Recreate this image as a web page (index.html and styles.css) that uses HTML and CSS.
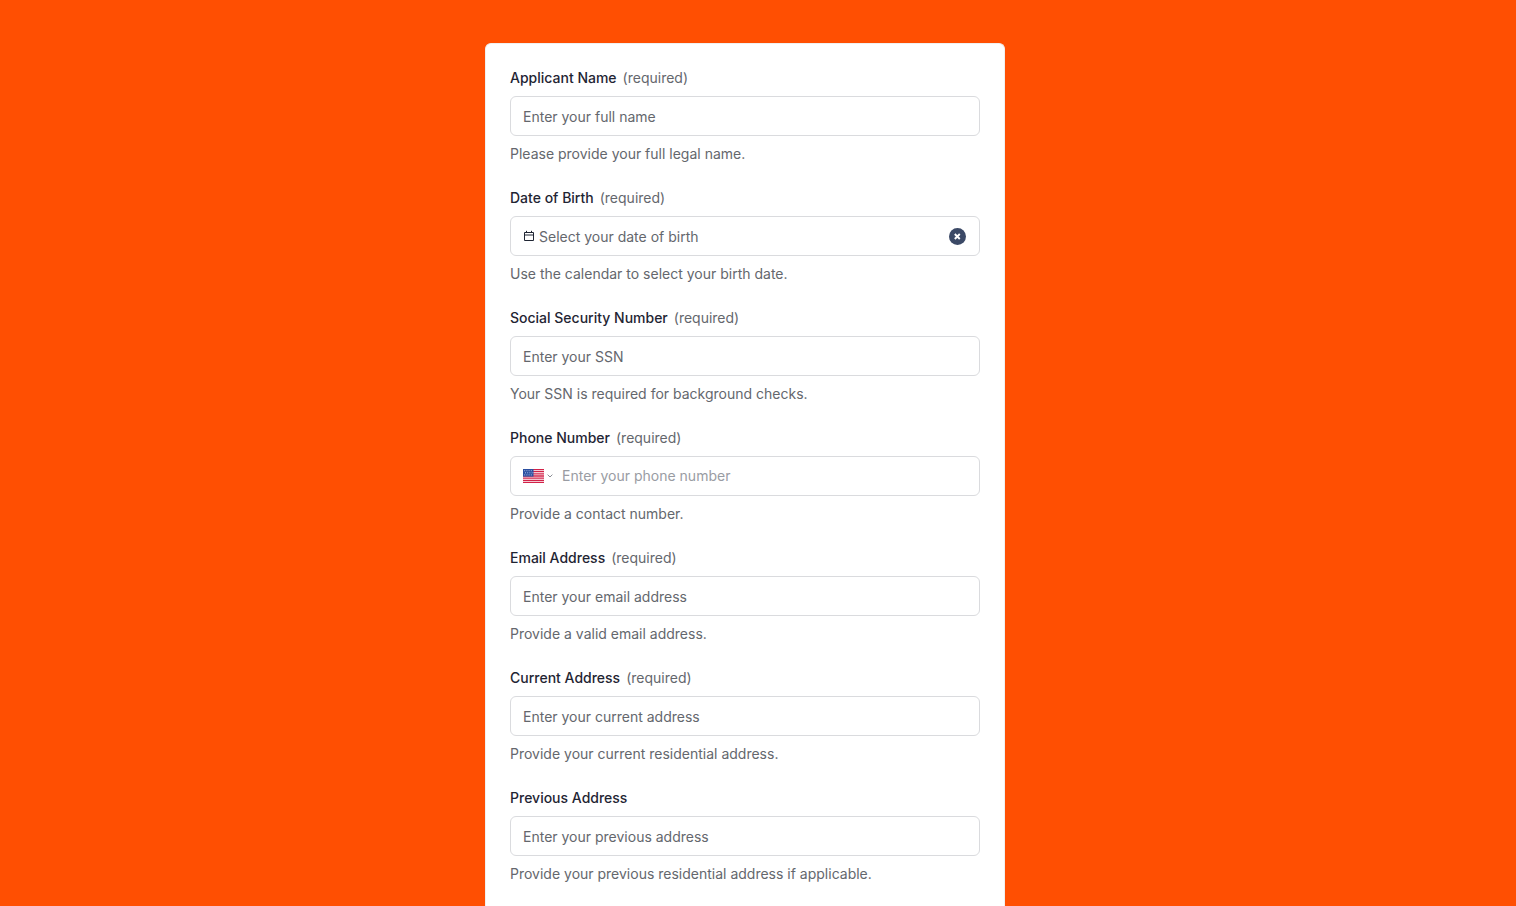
FILE: index.html
```html
<!DOCTYPE html>
<html lang="en">
<head>
<meta charset="utf-8">
<meta name="viewport" content="width=device-width, initial-scale=1">
<title>Application Form</title>
<link rel="stylesheet" href="styles.css">
</head>
<body>
<main class="page">
  <form class="card">
    <div class="field">
      <div class="field-head"><label class="label" for="name">Applicant Name</label><span class="required">(required)</span></div>
      <input class="input" id="name" type="text" placeholder="Enter your full name" aria-describedby="name-help">
      <p class="help" id="name-help">Please provide your full legal name.</p>
    </div>
    <div class="field">
      <div class="field-head"><label class="label" for="dob">Date of Birth</label><span class="required">(required)</span></div>
      <div class="control control-date">
        <svg class="calendar" viewBox="0 0 12 12" aria-hidden="true"><path d="M1.500 2.500h9v8h-9zM1.500 5h9M3.500 .8v2M8.500 .8v2" fill="none" stroke="currentColor"/></svg>
        <input class="bare bare-tall" id="dob" type="text" placeholder="Select your date of birth" aria-describedby="dob-help">
        <button class="clear" type="button" aria-label="Clear date"><svg class="clear-icon" viewBox="0 0 17 17" aria-hidden="true"><path d="M5.800 6l5 5M10.800 6l-5 5" fill="none" stroke="currentColor" stroke-width="1.900"/></svg></button>
      </div>
      <p class="help" id="dob-help">Use the calendar to select your birth date.</p>
    </div>
    <div class="field">
      <div class="field-head"><label class="label" for="ssn">Social Security Number</label><span class="required">(required)</span></div>
      <input class="input" id="ssn" type="text" placeholder="Enter your SSN" aria-describedby="ssn-help">
      <p class="help" id="ssn-help">Your SSN is required for background checks.</p>
    </div>
    <div class="field">
      <div class="field-head"><label class="label" for="phone">Phone Number</label><span class="required">(required)</span></div>
      <div class="control control-phone">
        <button class="country" type="button" aria-label="Country: United States">
          <svg class="flag" viewBox="0 0 21 14" aria-hidden="true">
            <path d="M0 0h21v14H0z" fill="#fff"/>
            <path d="M0 .5h21M0 2.700h21M0 4.900h21M0 7h21M0 9.100h21M0 11.300h21M0 13.500h21" stroke="#d22248" stroke-width="1.300"/>
            <path d="M0 0h10.500v7.600H0z" fill="#2b4fa0"/>
            <path d="M1.200 1.700h8.500M2 3.800h8M1.200 5.900h8.500" stroke="#b9c8ea" stroke-width=".9" stroke-dasharray="1 1.200"/>
          </svg>
          <svg class="chevron" viewBox="0 0 6 4" aria-hidden="true"><path d="M.6 .6L3 3 5.400 .6" fill="none" stroke="currentColor"/></svg>
        </button>
        <input class="bare bare-light" id="phone" type="tel" placeholder="Enter your phone number" aria-describedby="phone-help">
      </div>
      <p class="help" id="phone-help">Provide a contact number.</p>
    </div>
    <div class="field">
      <div class="field-head"><label class="label" for="email">Email Address</label><span class="required">(required)</span></div>
      <input class="input" id="email" type="email" placeholder="Enter your email address" aria-describedby="email-help">
      <p class="help" id="email-help">Provide a valid email address.</p>
    </div>
    <div class="field">
      <div class="field-head"><label class="label" for="current">Current Address</label><span class="required">(required)</span></div>
      <input class="input" id="current" type="text" placeholder="Enter your current address" aria-describedby="current-help">
      <p class="help" id="current-help">Provide your current residential address.</p>
    </div>
    <div class="field">
      <div class="field-head"><label class="label" for="previous">Previous Address</label></div>
      <input class="input" id="previous" type="text" placeholder="Enter your previous address" aria-describedby="previous-help">
      <p class="help" id="previous-help">Provide your previous residential address if applicable.</p>
    </div>
  </form>
</main>
</body>
</html>
```
FILE: styles.css
```css
* { box-sizing: border-box; }

body {
  margin: 0;
  background: #ff4f02;
  color: #1f2533;
  font: 14px/20px Inter, "Liberation Sans", sans-serif;
}

.page {
  display: flex;
  justify-content: center;
  padding: 43px 26px 0 0;
}

.card {
  display: flex;
  flex-direction: column;
  gap: 24px;
  width: 100%;
  max-width: 520px;
  padding: 24px;
  background: #fff;
  border: 1px solid #f0f0f0;
  border-bottom: 0;
  border-radius: 6px 6px 0 0;
}

.field {
  display: flex;
  flex-direction: column;
  gap: 8px;
}

.field-head {
  display: flex;
  gap: 6px;
}

.label { font-weight: 500; }

.required,
.help { color: #64676d; }

.help { margin: 0; }

.input,
.control {
  width: 100%;
  height: 40px;
  padding: 0 12px;
  background: #fff;
  border: 1px solid #dadbde;
  border-radius: 6px;
}

.input,
.bare {
  color: inherit;
  font: inherit;
}

.input::placeholder,
.bare::placeholder {
  color: #64676d;
  opacity: 1;
}

.control {
  display: flex;
  align-items: center;
}

.bare {
  flex: 1;
  min-width: 0;
  padding: 0;
  background: none;
  border: 0;
}

.bare-tall { height: 100%; }

.bare-light::placeholder { color: #999ca3; }

.control-date { gap: 4px; }

.calendar {
  width: 12px;
  height: 12px;
}

.clear,
.country {
  display: flex;
  align-items: center;
  padding: 0;
  background: none;
  border: 0;
}

.clear {
  margin-right: 1px;
  background: #3b4966;
  border-radius: 50%;
  color: #fff;
}

.clear-icon {
  width: 17px;
  height: 17px;
}

.control-phone { gap: 9px; }

.country {
  gap: 3px;
  color: #8b8e95;
}

.flag {
  width: 21px;
  height: 14px;
}

.chevron {
  width: 6px;
  height: 4px;
}
```
